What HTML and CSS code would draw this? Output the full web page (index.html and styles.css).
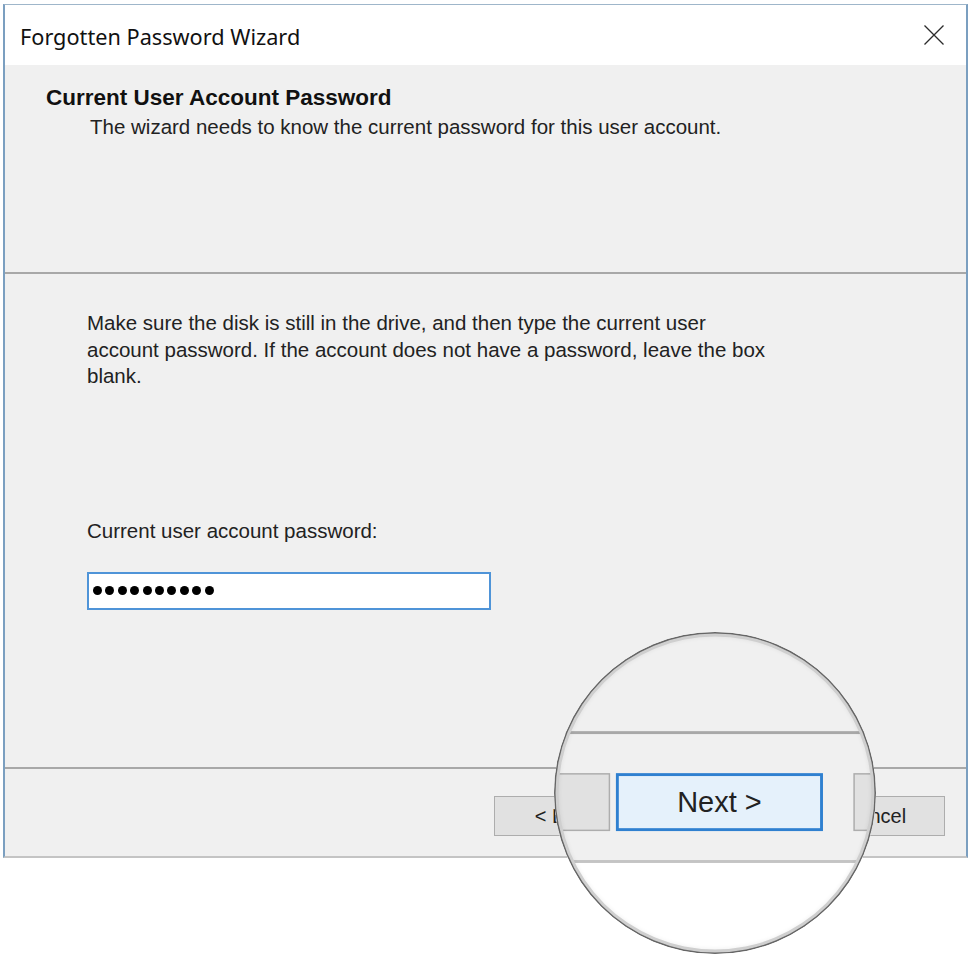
FILE: index.html
```html
<!DOCTYPE html>
<html>
<head>
<meta charset="utf-8">
<title>Forgotten Password Wizard</title>
<link rel="stylesheet" href="styles.css">
</head>
<body>
<div class="stage">
  <div class="dlg">
    <div class="titlebar">
      <span class="title">Forgotten Password Wizard</span>
      <svg class="close" width="22" height="22" viewBox="0 0 22 22"><path d="M1.5 1.5 L20.5 20.5 M20.5 1.5 L1.5 20.5" stroke="#2b2b2b" stroke-width="1.3" fill="none"/></svg>
    </div>
    <div class="header">
      <div class="h-title">Current User Account Password</div>
      <div class="h-sub">The wizard needs to know the current password for this user account.</div>
    </div>
    <div class="sep"></div>
    <div class="content">
      <p class="desc">Make sure the disk is still in the drive, and then type the current user<br>account password. If the account does not have a password, leave the box<br>blank.</p>
      <div class="label">Current user account password:</div>
      <div class="input"><span class="dot"></span><span class="dot"></span><span class="dot"></span><span class="dot"></span><span class="dot"></span><span class="dot"></span><span class="dot"></span><span class="dot"></span><span class="dot"></span><span class="dot"></span></div>
    </div>
    <div class="sep"></div>
    <div class="footer">
      <div class="btn back">&lt; Back</div>
      <div class="btn next">Next &gt;</div>
      <div class="btn cancel">Cancel</div>
    </div>
  </div>

  <div class="lens">
    <div class="lens-view">
      <div class="dlg">
        <div class="titlebar"></div>
        <div class="header"></div>
        <div class="sep"></div>
        <div class="content"></div>
        <div class="sep"></div>
        <div class="footer">
          <div class="btn back">&lt; Back</div>
          <div class="btn next">Next &gt;</div>
          <div class="btn cancel">Cancel</div>
        </div>
      </div>
    </div>
    <div class="ring"></div>
  </div>
</div>
</body>
</html>
```

FILE: styles.css
```css
html, body {
  margin: 0;
  padding: 0;
  background: #ffffff;
}

.stage {
  position: relative;
  width: 975px;
  height: 961px;
  overflow: hidden;
  background: #ffffff;
  padding: 4px 0 0 3px;
  box-sizing: border-box;
}

.dlg {
  width: 965px;
  height: 854px;
  box-sizing: border-box;
  border-left: 2px solid #7b9fc0;
  border-right: 2px solid #7b9fc0;
  border-top: 1px solid #9fb6ca;
  border-bottom: 2px solid #c4c4c4;
  background: #f0f0f0;
  display: flex;
  flex-direction: column;
  font-family: "Liberation Sans", Arial, sans-serif;
  color: #1a1a1a;
}

.titlebar {
  height: 60px;
  flex: none;
  background: #ffffff;
  display: flex;
  align-items: center;
  justify-content: space-between;
  padding: 0 21px 0 15px;
}

.title {
  font-family: "Noto Sans", "Open Sans", sans-serif;
  font-size: 21.7px;
  color: #111111;
  margin-top: 2px;
}

.close {
  display: block;
  margin-top: 0;
}

.header {
  height: 207px;
  flex: none;
  box-sizing: border-box;
  padding: 19px 0 0 41px;
}

.h-title {
  font-weight: bold;
  font-size: 22.5px;
  line-height: 27px;
  color: #111111;
}

.h-sub {
  font-size: 20.5px;
  line-height: 26px;
  margin-left: 44px;
  margin-top: 3px;
  color: #222222;
}

.sep {
  height: 2px;
  flex: none;
  background: #a8a8a8;
}

.content {
  flex: 1;
  padding: 36px 0 0 82px;
}

.desc {
  margin: 0;
  font-size: 20.5px;
  line-height: 26.5px;
  color: #222222;
}

.label {
  margin-top: 128px;
  font-size: 20.5px;
  line-height: 26px;
  color: #222222;
}

.input {
  margin-top: 28px;
  width: 404px;
  height: 38px;
  box-sizing: border-box;
  border: 2px solid #4f94d8;
  background: #ffffff;
  display: flex;
  align-items: center;
  gap: 3.4px;
  padding-left: 4px;
}

.dot {
  width: 9px;
  height: 9px;
  border-radius: 50%;
  background: #000000;
}

.footer {
  height: 87px;
  flex: none;
  box-sizing: border-box;
  padding: 27px 21px 0 0;
  display: flex;
  justify-content: flex-end;
  align-items: flex-start;
}

.btn {
  height: 40px;
  box-sizing: border-box;
  border: 1px solid #adadad;
  background: #e1e1e1;
  display: flex;
  align-items: center;
  justify-content: center;
  font-size: 20px;
  color: #222222;
}

.back { width: 143px; }
.next {
  width: 143px;
  margin-left: 4px;
  border: 2px solid #2f80d0;
  background: #e5f1fb;
}
.cancel {
  width: 140px;
  margin-left: 21px;
}

.lens {
  position: absolute;
  left: 554px;
  top: 632px;
  width: 322px;
  height: 322px;
  border-radius: 50%;
  overflow: hidden;
  background: #ffffff;
}

.lens-view {
  position: absolute;
  left: -554px;
  top: -632px;
  width: 975px;
  height: 961px;
  box-sizing: border-box;
  padding: 4px 0 0 3px;
  background: #ffffff;
  transform-origin: 697px 847px;
  transform: scale(1.448);
}

.ring {
  position: absolute;
  inset: 0;
  border-radius: 50%;
  box-shadow: inset 0 0 0 1.5px #666666, inset 0 0 0 4.5px #cfcfcf, inset 0 0 4px 5px rgba(0,0,0,0.06);
}
```
